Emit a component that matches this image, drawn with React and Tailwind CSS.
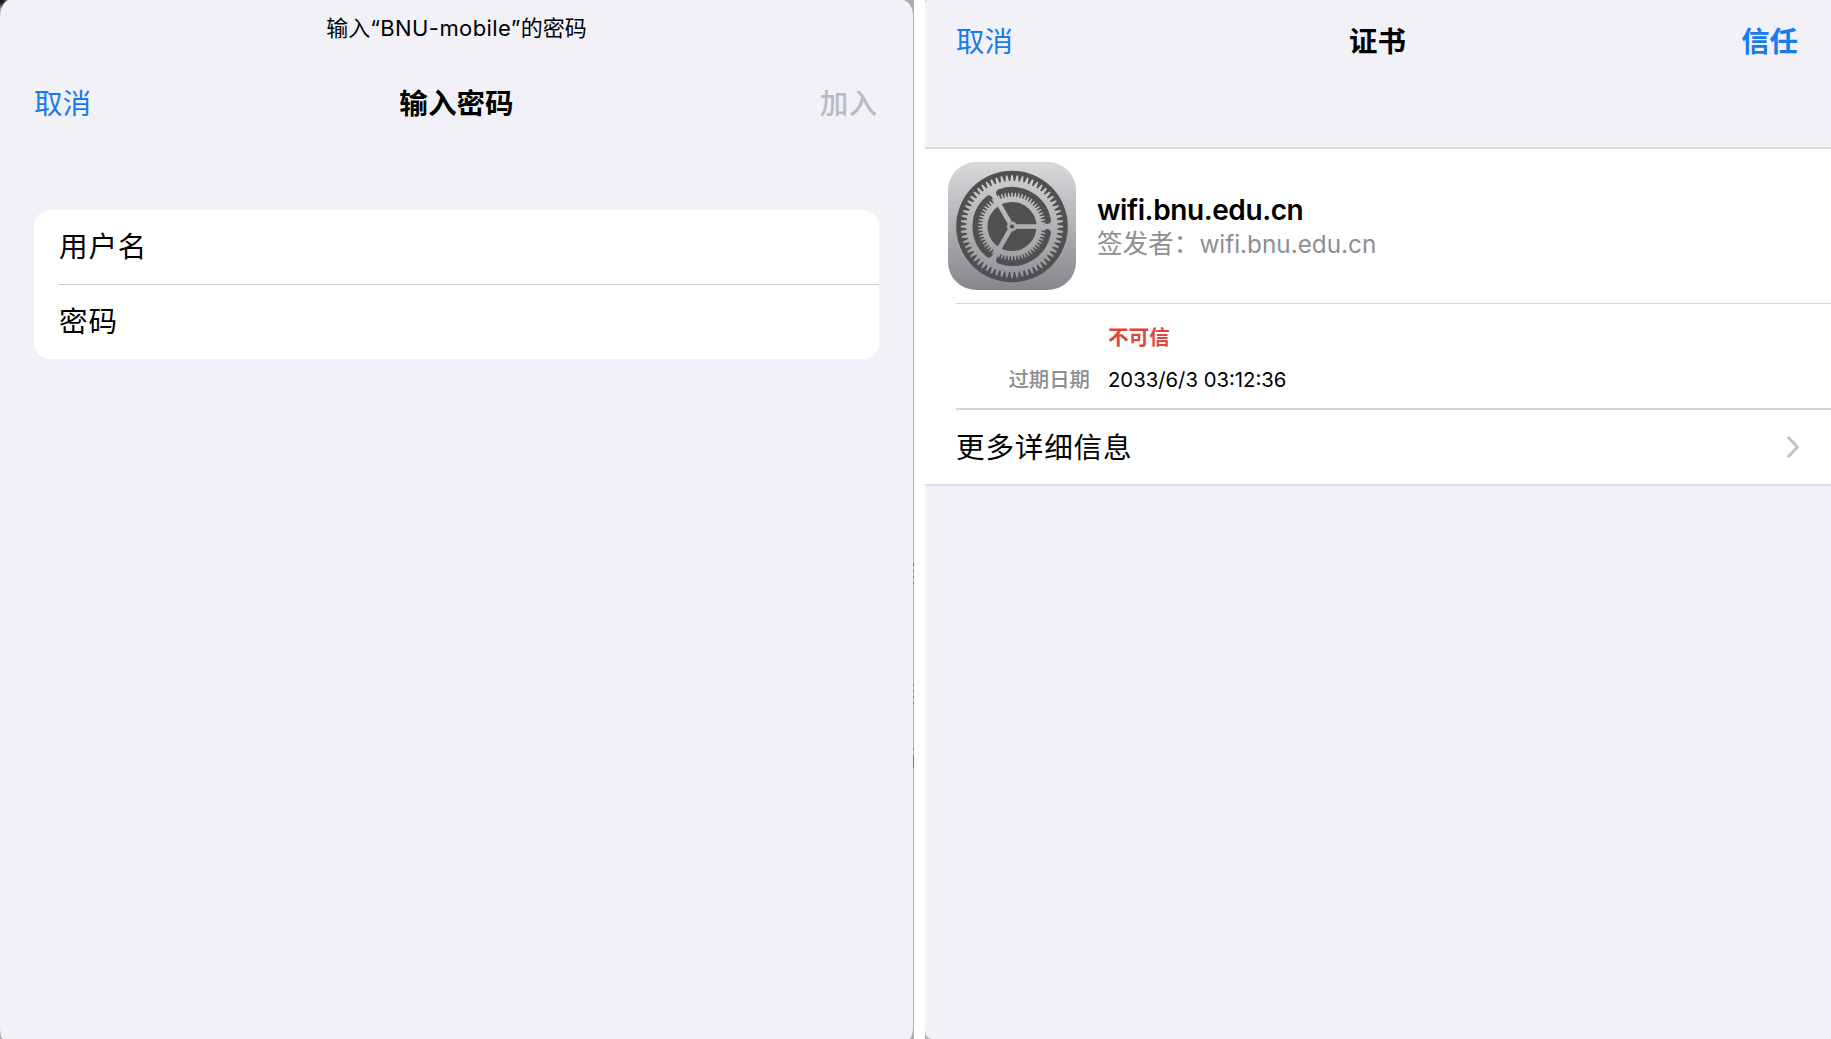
import React from "react";

const CX = 64;
const CY = 64.5;

function polar(r, deg) {
  const a = (deg * Math.PI) / 180;
  return [CX + r * Math.cos(a), CY + r * Math.sin(a)];
}

function toothedRing(count, inner, outer, baseShare, tipShare) {
  const step = 360 / count;
  const pts = [];
  for (let i = 0; i < count; i++) {
    const mid = i * step;
    pts.push(polar(inner, mid - step * baseShare));
    pts.push(polar(outer, mid - step * tipShare));
    pts.push(polar(outer, mid + step * tipShare));
    pts.push(polar(inner, mid + step * baseShare));
  }
  return "M" + pts.map((p) => p[0].toFixed(2) + " " + p[1].toFixed(2)).join("L") + "Z";
}

function windowPath() {
  const a = polar(29, 12.5);
  const b = polar(35.5, 10.5);
  const c = polar(35.5, 109.5);
  const d = polar(29, 107.5);
  return `M${a}L${b}A35.5 35.5 0 0 1 ${c}L${d}A29 29 0 0 0 ${a}Z`;
}

function SettingsIcon() {
  return (
    <svg className="size-32 shrink-0" viewBox="0 0 128 128">
      <defs>
        <linearGradient id="plate" x1="0" y1="0" x2="0" y2="1">
          <stop offset="0" stopColor="#d9dadc" />
          <stop offset="1" stopColor="#86878d" />
        </linearGradient>
        <linearGradient id="metal" gradientUnits="userSpaceOnUse" x1="0" y1="10" x2="0" y2="120">
          <stop offset="0" stopColor="#cfd0d2" />
          <stop offset="1" stopColor="#929398" />
        </linearGradient>
      </defs>
      <rect width="128" height="128" rx="28" fill="url(#plate)" />
      <circle cx={CX} cy={CY} r="55.8" fill="#505050" />
      <path d={toothedRing(60, 45.3, 51.3, 0.38, 0.15)} fill="url(#metal)" />
      <circle cx={CX} cy={CY} r="45.4" fill="url(#metal)" />
      {[0, 120, 240].map((turn) => (
        <path
          key={turn}
          d={windowPath()}
          transform={`rotate(${turn} ${CX} ${CY})`}
          fill="#505050"
          stroke="#505050"
          strokeWidth="8"
          strokeLinejoin="round"
        />
      ))}
      <path d={toothedRing(60, 29.6, 34, 0.36, 0.14)} fill="url(#metal)" />
      <circle cx={CX} cy={CY} r="24.5" fill="#505050" />
      <g stroke="url(#metal)" fill="none" strokeWidth="4.6">
        <path d={`M${CX} ${CY}L${polar(40, 0.2)}`} />
        <path d={`M${CX} ${CY}L${polar(40, 120)}`} />
        <path d={`M${CX} ${CY}L${polar(40, 240)}`} />
      </g>
      <circle cx={CX} cy={CY} r="5" fill="#a9aaad" />
      <circle cx={CX} cy={CY} r="2.1" fill="#505050" />
    </svg>
  );
}

function PanelEdge() {
  return (
    <div className="flex w-px flex-col bg-[#b4b4b4]">
      <i className="mt-[563px] h-[3px] bg-[#707070]" />
      <i className="mt-1 h-0.5 bg-[#808080]" />
      <i className="mt-1 h-0.5 bg-[#808080]" />
      <i className="mt-1 h-0.5 bg-[#808080]" />
      <i className="mt-[100px] h-0.5 bg-[#808080]" />
      <i className="mt-1 h-0.5 bg-[#808080]" />
      <i className="mt-1 h-0.5 bg-[#808080]" />
      <i className="mt-1 h-0.5 bg-[#808080]" />
      <i className="mt-[44px] h-0.5 bg-[#808080]" />
      <i className="mt-[5px] h-[13px] bg-[#757575]" />
    </div>
  );
}

function PasswordPanel() {
  return (
    <div className="flex w-[914px] shrink-0 bg-[radial-gradient(circle_at_0_0,#181818_3px,#acacac_9px)]">
      <section className="h-full w-[913px] rounded-tl-[10px_18px] rounded-tr-[11px_16px] rounded-br-[4px_12px] rounded-bl-[3px_12px] bg-[#f2f1f7] px-[34px]">
        <p className="h-[55px] text-center text-[22px] leading-[53px]">
          输入<span className="font-['Inter'] text-[22px] tracking-[0.4px]">“BNU-mobile”</span>的密码
        </p>
        <header className="grid h-[95px] grid-cols-3 items-center text-[28.6px] leading-[94px]">
          <button className="-mt-0.5 text-left text-[#167cee]">取消</button>
          <h1 className="-mt-0.5 text-center font-bold">输入密码</h1>
          <button className="-mt-0.5 pr-0.5 text-right font-medium text-[#bbbbbf]">加入</button>
        </header>
        <div className="mt-[60px] h-[149px] rounded-2xl bg-white pl-[25px] tracking-[0.8px]">
          <div className="h-[75px] border-b border-[#cbcbcd] text-[28.6px] leading-[70px]">用户名</div>
          <div className="h-[74px] text-[28.6px] leading-[70px]">密码</div>
        </div>
      </section>
      <PanelEdge />
    </div>
  );
}

function CertificatePanel() {
  return (
    <div className="min-w-0 flex-1 bg-[#b4b4b4]">
      <section className="h-full rounded-tl-[2px] rounded-bl-[8px] bg-[#f2f1f7]">
        <header className="grid h-[147px] grid-cols-3 pl-[31px] pr-[33px] text-[28.4px] leading-[80px]">
          <button className="h-20 text-left text-[#167cee]">取消</button>
          <h1 className="pl-px text-center font-bold">证书</h1>
          <button className="h-20 text-right font-bold text-[#167cee]">信任</button>
        </header>
        <div className="h-[339px] border-y-2 border-[#dcdce1] bg-white">
          <div className="flex h-[154px] pl-[23px] pt-[13px]">
            <SettingsIcon />
            <div className="pl-[21px] pt-[31px]">
              <h2 className="font-['Inter'] text-[28px] font-semibold leading-[34px] tracking-[-0.4px]">wifi.bnu.edu.cn</h2>
              <p className="font-['Inter','Noto_Sans_CJK_SC',sans-serif] text-[25.6px] leading-[34px] text-[#8e8e92]">
                签发者：<span className="text-[24.3px]">wifi.bnu.edu.cn</span>
              </p>
            </div>
          </div>
          <div className="ml-[31px] h-[107px] border-y border-b-2 border-[#d6d6d9] pt-[12px]">
            <p className="pl-[152px] text-[20.6px] font-bold leading-[40px] text-[#e0463c]">不可信</p>
            <div className="flex pt-[2px] text-[20.4px] leading-[40px]">
              <span className="w-[134px] text-right font-medium text-[#8e8e92]">过期日期</span>
              <span className="pl-[18px] font-['Inter'] text-[20.3px] leading-[43px]">2033/6/3 03:12:36</span>
            </div>
          </div>
          <div className="flex h-[74px] items-center justify-between pl-[31px] pr-8">
            <span className="-mt-0.5 text-[28.6px] leading-[72px] tracking-[0.8px]">更多详细信息</span>
            <svg className="h-[22px] w-3" viewBox="0 0 12 22" fill="none" stroke="#c3c3c5" strokeWidth="3" strokeLinecap="round" strokeLinejoin="round">
              <path d="M1.7 1.8L10.4 11L1.7 20.2" />
            </svg>
          </div>
        </div>
      </section>
    </div>
  );
}

export default function App() {
  return (
    <main className="flex h-[1039px] w-[1831px] gap-[11px] overflow-hidden bg-white font-['Noto_Sans_CJK_SC',sans-serif] text-black">
      <PasswordPanel />
      <CertificatePanel />
    </main>
  );
}
